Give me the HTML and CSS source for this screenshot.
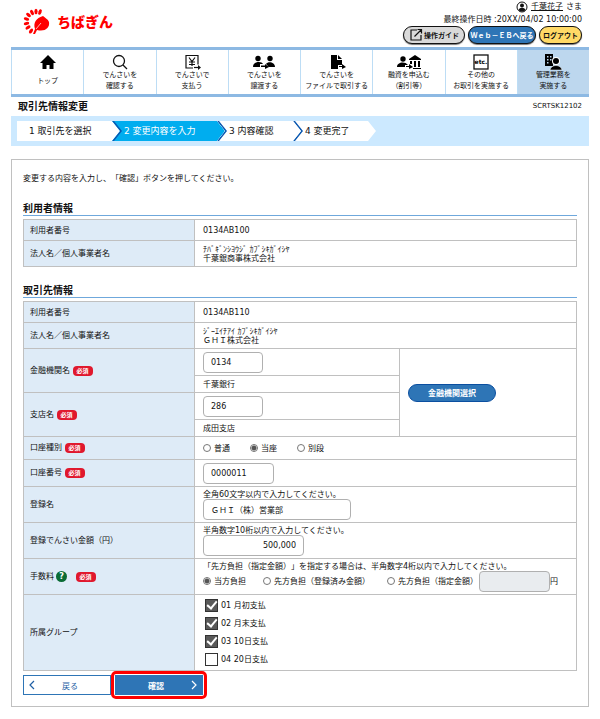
FILE: index.html
```html
<!DOCTYPE html>
<html lang="ja">
<head>
  <meta charset="UTF-8">
  <title>取引先情報変更</title>
  <link rel="stylesheet" href="styles.css">
</head>
<body>
  <header class="header">
    <div class="logo">
      <svg width="28" height="28" viewBox="0 0 28 28" fill="#f00">
        <ellipse cx="17" cy="4" rx="1.6" ry="2.8" transform="rotate(20 17 4)"/>
        <ellipse cx="13" cy="3.5" rx="1.6" ry="2.8"/>
        <ellipse cx="9" cy="4.500" rx="1.6" ry="2.8" transform="rotate(-28 9 4.500)"/>
        <ellipse cx="5.500" cy="7" rx="1.6" ry="2.8" transform="rotate(-50 5.500 7)"/>
        <ellipse cx="3.500" cy="11" rx="1.6" ry="2.8" transform="rotate(-75 3.500 11)"/>
        <ellipse cx="3.500" cy="15.500" rx="1.6" ry="2.8" transform="rotate(82 3.500 15.500)"/>
        <ellipse cx="5" cy="19.500" rx="1.6" ry="2.8" transform="rotate(58 5 19.500)"/>
        <ellipse cx="8" cy="23" rx="1.6" ry="2.8" transform="rotate(35 8 23)"/>
        <path d="M20 8C13 10 10 15 12 21l-2 5h2l2-4c8 2 13-2 12-8-1-3-4-4-6-6z"/>
        <path d="M13 21l5-6" fill="none" stroke="#fff" stroke-width=".7"/>
      </svg>
      <span>ちばぎん</span>
    </div>
    <div class="account">
      <div class="user">
        <svg width="12" height="12" viewBox="0 0 12 12"><circle cx="6" cy="6" r="5" fill="#fff" stroke="#111"/><circle cx="6" cy="4.5" r="2" fill="#111"/><path d="M2.5 9c1-3 6-3 7 0-2 2-5 2-7 0z" fill="#111"/></svg>
        <a href="#">千葉花子 </a> さま
      </div>
      <div>最終操作日時 :20XX/04/02 10:00:00</div>
      <div class="header-buttons">
        <button type="button" class="pill guide">
          <svg width="14" height="14" viewBox="0 0 14 14" fill="none" stroke="#111" stroke-width="1.2"><path d="M8 2H2v10h10V7M5.5 8.500L12.500 1.500M8.500 1.500h4v4"/></svg>
          操作ガイド
        </button>
        <button type="button" class="pill eb">Ｗｅｂ－ＥＢへ戻る</button>
        <button type="button" class="pill logout">ログアウト</button>
      </div>
    </div>
  </header>

  <nav class="nav">
    <a href="#" class="top">
      <svg width="20" height="16" viewBox="0 0 20 16"><path d="M10 1l8 8h-2.500v6h-4v-4h-3v4h-4V9H2z"/></svg>
      <span>トップ</span>
    </a>
    <a href="#">
      <svg width="20" height="16" viewBox="0 0 20 16" fill="none" stroke="#111" stroke-width="1.3"><circle cx="9" cy="7" r="5.500"/><path d="M13 11l4 4"/></svg>
      <span>でんさいを<br>確認する</span>
    </a>
    <a href="#">
      <svg width="20" height="16" viewBox="0 0 20 16" fill="none" stroke="#111" stroke-width="1.2"><path d="M11 14H4V1.500h12v9M7 3.500l3 4 3-4M10 7.500V12M7 8h6M7 10.500h6"/><path d="M12 13.500h4"/><path d="M16 11l3 2.500-3 2.500z" fill="#111" stroke="none"/></svg>
      <span>でんさいで<br>支払う</span>
    </a>
    <a href="#">
      <svg width="24" height="16" viewBox="0 0 24 16"><circle cx="6" cy="4.500" r="2.7"/><circle cx="18" cy="4.500" r="2.7"/><path d="M1 13c0-6 9-6 10-3H8v3zM14 10c2-3 9-2 9 3h-6zM9 11.500h4v-1.500l4 3-4 2v-2H9z"/></svg>
      <span>でんさいを<br>譲渡する</span>
    </a>
    <a href="#">
      <svg width="20" height="16" viewBox="0 0 20 16"><path d="M4 1h6v5h5v5h-4v4H4zM11 1l4 4h-4zM12 12h3v-2l4 3-4 2v-2h-3z"/></svg>
      <span>でんさいを<br>ファイルで取引する</span>
    </a>
    <a href="#">
      <svg width="26" height="16" viewBox="0 0 26 16"><circle cx="7" cy="5" r="2.7"/><path d="M1 13c0-5 8-6 11-2H9v2zM10 12h3v-2l4 3-4 2v-2h-3zM13 5l6-4 6 4v1H13zM14 7h2v3h-2zM18 7h2v6h-2zM22 7h2v6h-2zM17 14h8v1h-8z"/></svg>
      <span>融資を申込む<br>（割引等）</span>
    </a>
    <a href="#">
      <svg width="20" height="16" viewBox="0 0 20 16"><rect x="3" y="1" width="14" height="14" fill="#fff" stroke="#111" stroke-width="1.3"/><text x="10" y="10" text-anchor="middle" font-size="6" font-weight="bold">etc.</text></svg>
      <span>その他の<br>お取引を実施する</span>
    </a>
    <a href="#" class="current">
      <svg width="22" height="16" viewBox="0 0 22 16"><path fill-rule="evenodd" d="M3 0h8v12H3zM5 2v1.500h1.500V2zM8 2v1.500h1.500V2zM5 5v1.500h1.500V5zM8 5v1.500h1.500V5zM5 8v1.500h1.500V8z"/><circle cx="14" cy="7" r="4" fill="#fff"/><circle cx="14" cy="7" r="3"/><path d="M8 16c1-6 11-6 12 0z" stroke="#fff" stroke-width=".5"/></svg>
      <span>管理業務を<br>実施する</span>
    </a>
  </nav>

  <div class="title">
    <h1>取引先情報変更</h1>
    <span class="screen-id">SCRTSK12102</span>
  </div>

  <ol class="steps">
    <li class="first">1 取引先を選択</li>
    <li class="active">2 変更内容を入力</li>
    <li class="third">3 内容確認</li>
    <li class="last">4 変更完了</li>
  </ol>

  <form class="panel">
    <p class="lead">変更する内容を入力し、「確認」ボタンを押してください。</p>

    <h2>利用者情報</h2>
    <table>
      <colgroup><col class="col-head"><col></colgroup>
      <tr class="row-s"><th>利用者番号</th><td>0134AB100</td></tr>
      <tr class="row-m"><th>法人名／個人事業者名</th><td>ﾁﾊﾞｷﾞﾝｼﾖｳｼﾞ ｶﾌﾞｼｷｶﾞｲｼﾔ<br>千葉銀商事株式会社</td></tr>
    </table>

    <h2>取引先情報</h2>
    <table>
      <colgroup><col class="col-head"><col class="col-mid"><col></colgroup>
      <tr class="row-s"><th>利用者番号</th><td colspan="2">0134AB110</td></tr>
      <tr class="row-m"><th>法人名／個人事業者名</th><td colspan="2">ｼﾞｰｴｲﾁｱｲ ｶﾌﾞｼｷｶﾞｲｼﾔ<br>ＧＨＩ株式会社</td></tr>
      <tr class="row-l">
        <th rowspan="2"><label for="bank">金融機関名</label> <span class="must">必須</span></th>
        <td><input type="text" id="bank" class="w-s" value="0134"></td>
        <td rowspan="4"><button type="button" class="select-bank">金融機関選択</button></td>
      </tr>
      <tr class="row-name"><td>千葉銀行</td></tr>
      <tr class="row-l">
        <th rowspan="2"><label for="branch">支店名</label> <span class="must">必須</span></th>
        <td><input type="text" id="branch" class="w-s" value="286"></td>
      </tr>
      <tr class="row-name"><td>成田支店</td></tr>
      <tr class="row-type">
        <th>口座種別 <span class="must">必須</span></th>
        <td colspan="2">
          <div class="radios">
            <label><input type="radio" name="type">普通</label>
            <label><input type="radio" name="type" checked>当座</label>
            <label><input type="radio" name="type">別段</label>
          </div>
        </td>
      </tr>
      <tr class="row-l">
        <th><label for="number">口座番号</label> <span class="must">必須</span></th>
        <td colspan="2"><input type="text" id="number" class="w-m" value="0000011"></td>
      </tr>
      <tr class="row-xl">
        <th><label for="name">登録名</label></th>
        <td colspan="2"><p>全角60文字以内で入力してください。</p><input type="text" id="name" class="w-xl" value="ＧＨＩ（株）営業部"></td>
      </tr>
      <tr class="row-xl">
        <th><label for="amount">登録でんさい金額（円）</label></th>
        <td colspan="2"><p>半角数字10桁以内で入力してください。</p><input type="text" id="amount" class="w-l" value="500,000"></td>
      </tr>
      <tr class="row-xl">
        <th>手数料<button type="button" class="help">?</button> <span class="must">必須</span></th>
        <td colspan="2">
          <p>「先方負担（指定金額）」を指定する場合は、半角数字4桁以内で入力してください。</p>
          <div class="radios fee">
            <label><input type="radio" name="fee" checked>当方負担</label>
            <label><input type="radio" name="fee">先方負担（登録済み金額）</label>
            <label><input type="radio" name="fee">先方負担（指定金額）</label>
            <span class="yen"><input type="text" class="w-m" aria-label="指定金額" disabled>円</span>
          </div>
        </td>
      </tr>
      <tr class="row-group">
        <th>所属グループ</th>
        <td colspan="2">
          <div class="checks">
            <label><input type="checkbox" checked>01 月初支払</label>
            <label><input type="checkbox" checked>02 月末支払</label>
            <label><input type="checkbox" checked>03 10日支払</label>
            <label><input type="checkbox">04 20日支払</label>
          </div>
        </td>
      </tr>
    </table>

    <div class="actions">
      <button type="button" class="back">
        <svg width="6" height="10" viewBox="0 0 6 10" fill="none" stroke="currentColor" stroke-width="1.2"><path d="M5 1L1 5l4 4"/></svg>
        <span>戻る</span>
      </button>
      <div class="focus">
        <button type="submit" class="confirm">
          <span>確認</span>
          <svg width="6" height="10" viewBox="0 0 6 10" fill="none" stroke="currentColor" stroke-width="1.2"><path d="M1 1l4 4-4 4"/></svg>
        </button>
      </div>
    </div>
  </form>
</body>
</html>
```
FILE: styles.css
```css
* {
  box-sizing: border-box;
}
body {
  margin: 0;
  padding: 0 11px 12px;
  background: #fff;
  color: #111;
  font-family: "DejaVu Sans", "Noto Sans CJK JP", sans-serif;
  font-size: 8px;
  line-height: 9px;
  text-spacing-trim: space-all;
}
h1,
h2,
p,
ol {
  margin: 0;
  padding: 0;
}
a {
  color: inherit;
}
button,
input {
  font-family: inherit;
  font-size: 8px;
  color: inherit;
}
svg {
  flex: none;
}

/* header */
.header {
  display: flex;
  justify-content: space-between;
  height: 47px;
}
.logo {
  display: flex;
  align-items: center;
  gap: 6px;
  height: 28px;
  margin: 8px 0 0 12px;
  color: #f00;
  font-size: 14px;
  font-weight: 900;
}
.account {
  padding-right: 7px;
  text-align: right;
  line-height: 12px;
}
.user {
  display: flex;
  justify-content: flex-end;
  align-items: center;
  gap: 3px;
  height: 14px;
}
.header-buttons {
  display: flex;
  justify-content: flex-end;
  gap: 3px;
}
.pill {
  display: flex;
  align-items: center;
  justify-content: center;
  gap: 1px;
  height: 18px;
  padding: 0;
  border: 1px solid #111;
  border-radius: 9px;
  box-shadow: 0 1px 1px #777;
  font-size: 7px;
  font-weight: bold;
  white-space: nowrap;
}
.guide {
  width: 62px;
  background: #d9d9d9;
}
.eb {
  width: 68px;
  background: #2e75b6;
  color: #fff;
}
.logout {
  width: 43px;
  background: #ffd966;
}

/* global nav */
.nav {
  display: flex;
  border-top: 3px solid #8db9e3;
  border-bottom: 3px solid #8db9e3;
}
.nav a {
  display: flex;
  flex: 1;
  flex-direction: column;
  align-items: center;
  height: 44px;
  padding-top: 4px;
  border-left: 1px solid #bdddf5;
  font-size: 7px;
  line-height: 11px;
  text-align: center;
  text-decoration: none;
  white-space: nowrap;
}
.nav svg {
  height: 16px;
}
.nav .top span {
  padding-top: 6px;
}
.nav .current {
  background: #bdd7ee;
}

.title {
  display: flex;
  justify-content: space-between;
  align-items: center;
  height: 19px;
  padding: 0 7px;
}
h1 {
  font-size: 10px;
}
.screen-id {
  font-size: 7px;
}

/* progress steps */
.steps {
  display: flex;
  padding: 5px 6px;
  background: #cce9ff;
  list-style: none;
  font-size: 9px;
  line-height: 20px;
}
.steps li {
  position: relative;
  margin-right: -8px;
  padding-left: 12px;
  background: #fff;
  clip-path: polygon(0 0, calc(100% - 8px) 0, 100% 50%, calc(100% - 8px) 100%, 0 100%, 8px 50%);
}
.steps li + li::before {
  content: "";
  position: absolute;
  top: 0;
  left: 0;
  width: 10px;
  height: 100%;
  background: #0b58b0;
  clip-path: polygon(0 0, 2px 0, 100% 50%, 2px 100%, 0 100%, 8px 50%);
}
.steps .first {
  width: 103px;
  clip-path: polygon(0 0, calc(100% - 8px) 0, 100% 50%, calc(100% - 8px) 100%, 0 100%);
}
.steps .active {
  width: 113px;
  background: #00adef;
  color: #fff;
}
.steps .third {
  width: 84px;
}
.steps .last {
  width: 83px;
}

/* form */
.panel {
  margin-top: 13px;
  padding: 14px 11px 7px;
  border: 1px solid #c0c0c0;
}
.lead {
  margin-bottom: 19px;
}
h2 {
  margin-bottom: 3px;
  border-bottom: 1px solid #6fa8dc;
  font-size: 10px;
  line-height: 13px;
}
table {
  width: 100%;
  border-collapse: collapse;
  table-layout: fixed;
}
table + h2 {
  margin-top: 17px;
}
.col-head {
  width: 171px;
}
.col-mid {
  width: 205px;
}
th,
td {
  padding: 0 8px;
  border: 1px solid #c0c0c0;
  text-align: left;
  vertical-align: middle;
}
th {
  padding: 0 6px;
  background: #deebf7;
  font-weight: normal;
}
.row-s {
  height: 21px;
}
.row-m {
  height: 26px;
}
.row-l {
  height: 27px;
}
.row-name {
  height: 17px;
}
.row-type {
  height: 23px;
}
.row-xl {
  height: 36px;
}
.row-group {
  height: 76px;
}
.must {
  display: inline-block;
  padding: 0 4px;
  border-radius: 4px;
  background: #e0182d;
  color: #fff;
  font-size: 6px;
  font-weight: bold;
  line-height: 10px;
}
input[type="text"] {
  display: block;
  height: 21px;
  padding: 0 7px;
  border: 1px solid #b0b0b0;
  border-radius: 4px;
  background: #fff;
}
input[type="text"]:disabled {
  background: #e9ecef;
}
input.w-s {
  width: 60px;
}
input.w-m {
  width: 71px;
}
input.w-l {
  width: 101px;
  text-align: right;
}
input.w-xl {
  width: 148px;
}
.select-bank {
  display: block;
  width: 88px;
  height: 18px;
  padding: 0;
  border: 1px solid #0b4fa0;
  border-radius: 9px;
  background: #2e75b6;
  color: #fff;
  font-weight: bold;
}
.radios {
  display: flex;
  align-items: center;
  gap: 20px;
}
.radios label {
  display: flex;
  align-items: center;
  gap: 3px;
}
input[type="radio"] {
  appearance: none;
  width: 8px;
  height: 8px;
  margin: 0;
  border: 1px solid #777;
  border-radius: 50%;
}
input[type="radio"]:checked {
  background: radial-gradient(circle, #555 2px, #fff 3px);
}
.fee {
  gap: 17px;
}
.yen {
  display: flex;
  align-items: center;
  margin-left: -16px;
}
.help {
  width: 11px;
  height: 11px;
  margin: 0 6px 0 2px;
  padding: 0;
  border: 0;
  border-radius: 50%;
  background: #0a6b35;
  color: #fff;
  font-weight: bold;
  line-height: 11px;
}
.checks {
  display: flex;
  flex-direction: column;
  gap: 5px;
  padding-left: 2px;
}
.checks label {
  display: flex;
  align-items: center;
  gap: 3px;
}
input[type="checkbox"] {
  appearance: none;
  display: grid;
  place-items: center;
  width: 13px;
  height: 13px;
  margin: 0;
  border: 1px solid #333;
}
input[type="checkbox"]:checked {
  background: #595959;
}
input[type="checkbox"]:checked::before {
  content: "";
  width: 8px;
  height: 4px;
  margin-bottom: 3px;
  border: solid #fff;
  border-width: 0 0 2px 2px;
  transform: rotate(-50deg);
}

/* bottom buttons */
.actions {
  display: flex;
  align-items: center;
}
.back,
.confirm {
  display: flex;
  align-items: center;
  width: 88px;
  height: 20px;
  padding: 0 5px;
  border: 1px solid #2e75b6;
  background: #fff;
  color: #1f5fa5;
}
.actions span {
  flex: 1;
  text-align: center;
}
.focus {
  padding: 1px;
  border: 3px solid #f00;
  border-radius: 5px;
}
.confirm {
  background: #2e75b6;
  color: #fff;
  font-weight: bold;
}
```
